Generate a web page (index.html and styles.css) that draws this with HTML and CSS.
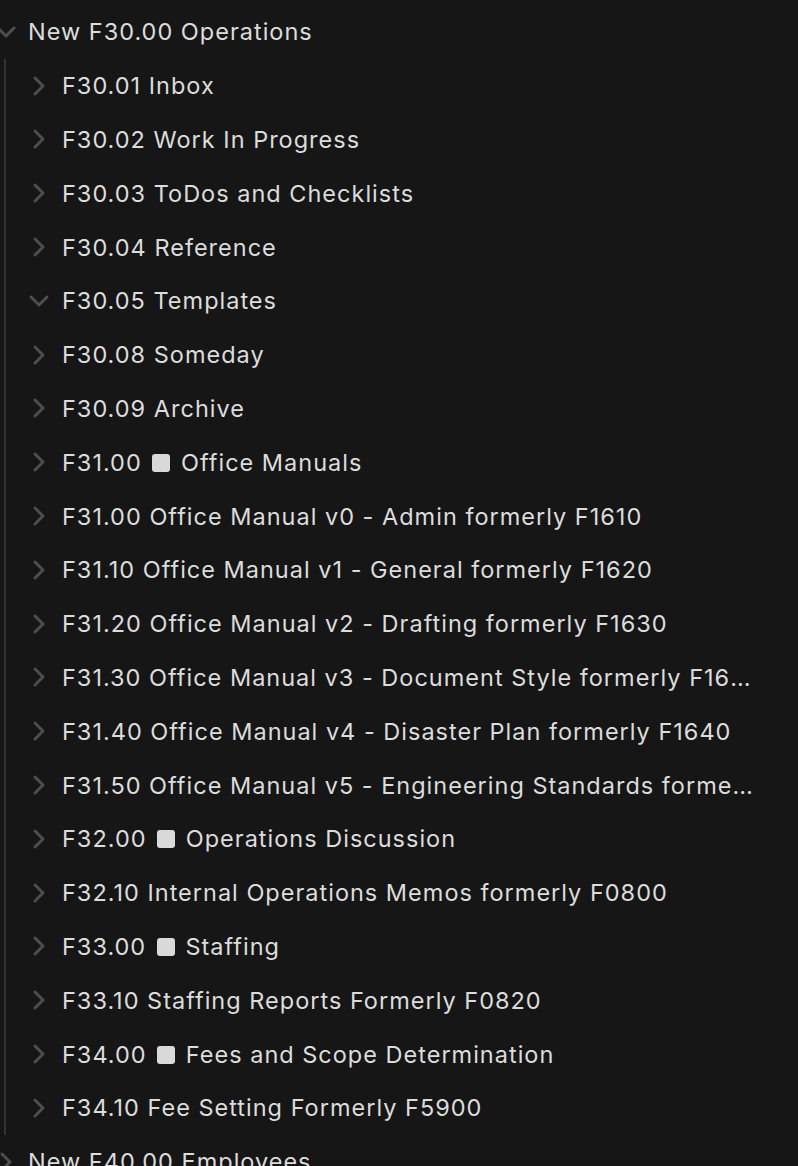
FILE: index.html
```html
<!DOCTYPE html>
<html lang="en">
<head>
  <meta charset="UTF-8" />
  <title>Files</title>
  <link rel="stylesheet" href="styles.css">
</head>
<body>
  <div class="tree">
    <div class="row top">
      <svg class="chev" viewBox="0 0 24 24"><path d="M6 9l6 6 6-6"/></svg>
      <span class="name">New F30.00 Operations</span>
    </div>
    <div class="children">
      <div class="row"><svg class="chev" viewBox="0 0 24 24"><path d="M9 18l6-6-6-6"/></svg><span class="name">F30.01 Inbox</span></div>
      <div class="row"><svg class="chev" viewBox="0 0 24 24"><path d="M9 18l6-6-6-6"/></svg><span class="name">F30.02 Work In Progress</span></div>
      <div class="row"><svg class="chev" viewBox="0 0 24 24"><path d="M9 18l6-6-6-6"/></svg><span class="name">F30.03 ToDos and Checklists</span></div>
      <div class="row"><svg class="chev" viewBox="0 0 24 24"><path d="M9 18l6-6-6-6"/></svg><span class="name">F30.04 Reference</span></div>
      <div class="row"><svg class="chev" viewBox="0 0 24 24"><path d="M6 9l6 6 6-6"/></svg><span class="name">F30.05 Templates</span></div>
      <div class="row"><svg class="chev" viewBox="0 0 24 24"><path d="M9 18l6-6-6-6"/></svg><span class="name">F30.08 Someday</span></div>
      <div class="row"><svg class="chev" viewBox="0 0 24 24"><path d="M9 18l6-6-6-6"/></svg><span class="name">F30.09 Archive</span></div>
      <div class="row"><svg class="chev" viewBox="0 0 24 24"><path d="M9 18l6-6-6-6"/></svg><span class="name">F31.00 <span class="sq"></span> Office Manuals</span></div>
      <div class="row"><svg class="chev" viewBox="0 0 24 24"><path d="M9 18l6-6-6-6"/></svg><span class="name">F31.00 Office Manual v0 - Admin formerly F1610</span></div>
      <div class="row"><svg class="chev" viewBox="0 0 24 24"><path d="M9 18l6-6-6-6"/></svg><span class="name">F31.10 Office Manual v1 - General formerly F1620</span></div>
      <div class="row"><svg class="chev" viewBox="0 0 24 24"><path d="M9 18l6-6-6-6"/></svg><span class="name">F31.20 Office Manual v2 - Drafting formerly F1630</span></div>
      <div class="row"><svg class="chev" viewBox="0 0 24 24"><path d="M9 18l6-6-6-6"/></svg><span class="name">F31.30 Office Manual v3 - Document Style formerly F1650</span></div>
      <div class="row"><svg class="chev" viewBox="0 0 24 24"><path d="M9 18l6-6-6-6"/></svg><span class="name">F31.40 Office Manual v4 - Disaster Plan formerly F1640</span></div>
      <div class="row"><svg class="chev" viewBox="0 0 24 24"><path d="M9 18l6-6-6-6"/></svg><span class="name">F31.50 Office Manual v5 - Engineering Standards formerly F1660</span></div>
      <div class="row"><svg class="chev" viewBox="0 0 24 24"><path d="M9 18l6-6-6-6"/></svg><span class="name">F32.00 <span class="sq"></span> Operations Discussion</span></div>
      <div class="row"><svg class="chev" viewBox="0 0 24 24"><path d="M9 18l6-6-6-6"/></svg><span class="name">F32.10 Internal Operations Memos formerly F0800</span></div>
      <div class="row"><svg class="chev" viewBox="0 0 24 24"><path d="M9 18l6-6-6-6"/></svg><span class="name">F33.00 <span class="sq"></span> Staffing</span></div>
      <div class="row"><svg class="chev" viewBox="0 0 24 24"><path d="M9 18l6-6-6-6"/></svg><span class="name">F33.10 Staffing Reports Formerly F0820</span></div>
      <div class="row"><svg class="chev" viewBox="0 0 24 24"><path d="M9 18l6-6-6-6"/></svg><span class="name">F34.00 <span class="sq"></span> Fees and Scope Determination</span></div>
      <div class="row"><svg class="chev" viewBox="0 0 24 24"><path d="M9 18l6-6-6-6"/></svg><span class="name">F34.10 Fee Setting Formerly F5900</span></div>
    </div>
    <div class="row top">
      <svg class="chev" viewBox="0 0 24 24"><path d="M9 18l6-6-6-6"/></svg>
      <span class="name">New F40.00 Employees</span>
    </div>
  </div>
</body>
</html>
```

FILE: styles.css
```css
html, body {
  margin: 0;
  background: #161616;
  height: 100%;
  overflow: hidden;
}
body {
  font-family: Inter, "Noto Sans", sans-serif;
  color: #dcdcdc;
  padding-top: 5px;
}
.tree {
  margin-left: -10px;
}
.row {
  display: flex;
  align-items: center;
  height: 53.8px;
  padding-right: 42px;
  font-size: 23.5px;
  letter-spacing: 1px;
  white-space: nowrap;
}
.chev {
  flex: none;
  width: 32px;
  height: 32px;
  margin-right: 7px;
  fill: none;
  stroke: #4e4e4e;
  stroke-width: 2.2;
  stroke-linecap: round;
  stroke-linejoin: round;
}
.top .chev {
  margin-right: 6px;
}
.name {
  overflow: hidden;
  text-overflow: ellipsis;
  min-width: 0;
}
.children {
  margin-left: 14px;
  border-left: 2px solid #333;
}
.children .row {
  padding-left: 17px;
}
.sq {
  display: inline-block;
  width: 18px;
  height: 18px;
  margin: 0 3px 0 3px;
  border-radius: 3px;
  background: #d9d9d9;
  vertical-align: -1px;
}
```
